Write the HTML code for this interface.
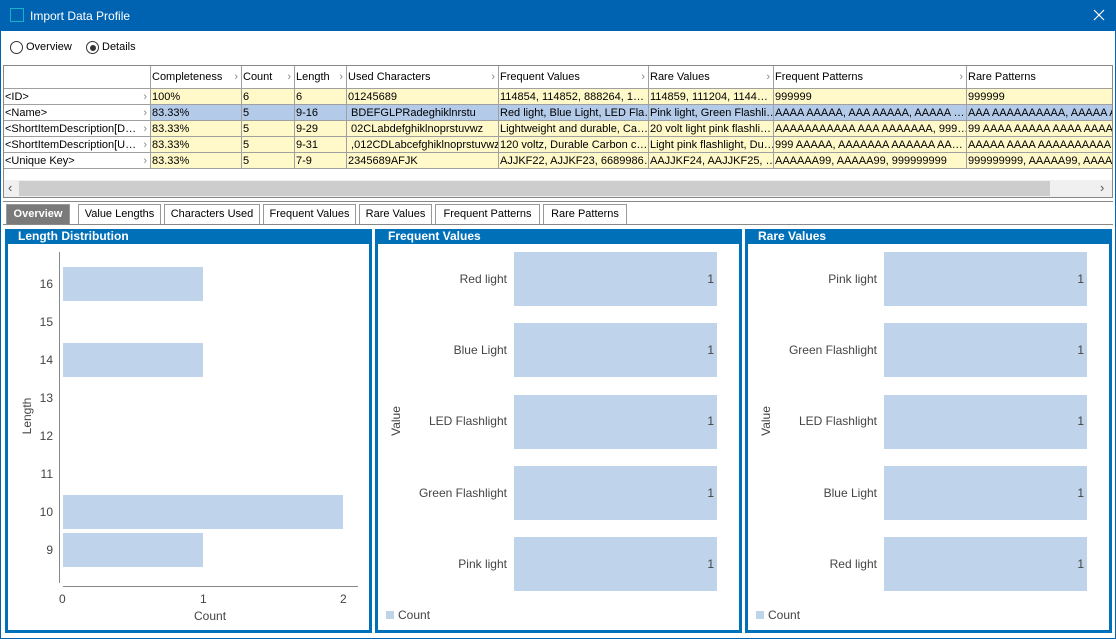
<!DOCTYPE html>
<html><head><style>
*{margin:0;padding:0;box-sizing:border-box}
body{width:1116px;height:639px;background:#fff;font-family:"Liberation Sans",sans-serif;font-size:11px;color:#000;position:relative;overflow:hidden}
.a{position:absolute}
.title{left:0;top:0;width:1116px;height:31px;background:#0063b1;color:#fff;font-size:12px}
.tbl{left:3px;top:65px;width:1110px;height:133px;border:1px solid #888;background:#fff;overflow:hidden}
.c{position:absolute;height:16px;line-height:16px;border-right:1px solid #a0a0a0;border-bottom:1px solid #a0a0a0;white-space:nowrap;overflow:hidden;padding-left:1px;font-size:11px}
.h{height:23px;line-height:22px;background:#fff}
.y{background:#fff8c8}
.s{background:#b3cbe9}
.tab{position:absolute;top:204px;height:20px;border:1px solid #999;border-bottom:none;line-height:18px;text-align:center;background:#fff;font-size:11px}
.pan{position:absolute;top:229px;height:404px;border:3px solid #0070b8;border-top:15px solid #0070b8;background:#fff}
.ph{position:absolute;top:-15px;left:10px;color:#fff;font-weight:bold;font-size:12px;line-height:14px}
.bar{position:absolute;background:#bfd3eb}
.lb{position:absolute;font-size:12px;color:#444;text-align:right}
</style></head><body>
<div class="a title">
 <div class="a" style="left:10px;top:8px;width:14px;height:14px;border:1px solid #1ab0c8"></div>
 <div class="a" style="left:30px;top:9px">Import Data Profile</div>
 <svg class="a" style="left:1093px;top:9px" width="12" height="12"><path d="M1 1L11 11M11 1L1 11" stroke="#fff" stroke-width="1.2"/></svg>
</div>
<div class="a" style="left:0;top:31px;width:1116px;height:608px;border:1px solid #0063b1;border-top:none"></div>
<div class="a" style="left:10px;top:41px;width:13px;height:13px;border:1px solid #333;border-radius:50%"></div>
<div class="a" style="left:26px;top:41px">Overview</div>
<div class="a" style="left:86px;top:41px;width:13px;height:13px;border:1px solid #333;border-radius:50%"></div>
<div class="a" style="left:89.5px;top:44.5px;width:6px;height:6px;background:#333;border-radius:50%"></div>
<div class="a" style="left:102px;top:41px">Details</div>

<div class="a tbl">
<div class="c h" style="left:0;top:0;width:147px"></div>
<div class="c h" style="left:147px;top:0;width:91px">Completeness<span style="position:absolute;right:3px;color:#888">›</span></div>
<div class="c h" style="left:238px;top:0;width:53px">Count<span style="position:absolute;right:3px;color:#888">›</span></div>
<div class="c h" style="left:291px;top:0;width:52px">Length<span style="position:absolute;right:3px;color:#888">›</span></div>
<div class="c h" style="left:343px;top:0;width:152px">Used Characters<span style="position:absolute;right:3px;color:#888">›</span></div>
<div class="c h" style="left:495px;top:0;width:150px">Frequent Values<span style="position:absolute;right:3px;color:#888">›</span></div>
<div class="c h" style="left:645px;top:0;width:125px">Rare Values<span style="position:absolute;right:3px;color:#888">›</span></div>
<div class="c h" style="left:770px;top:0;width:193px">Frequent Patterns<span style="position:absolute;right:3px;color:#888">›</span></div>
<div class="c h" style="left:963px;top:0;width:150px">Rare Patterns</div>

<div class="c" style="left:0;top:23px;width:147px">&lt;ID&gt;<span style="position:absolute;right:3px;color:#888">›</span></div>
<div class="c y" style="left:147px;top:23px;width:91px">100%</div><div class="c y" style="left:238px;top:23px;width:53px">6</div><div class="c y" style="left:291px;top:23px;width:52px">6</div><div class="c y" style="left:343px;top:23px;width:152px">01245689</div><div class="c y" style="left:495px;top:23px;width:150px">114854, 114852, 888264, 1…</div><div class="c y" style="left:645px;top:23px;width:125px">114859, 111204, 1144…</div><div class="c y" style="left:770px;top:23px;width:193px">999999</div><div class="c y" style="left:963px;top:23px;width:150px">999999</div>

<div class="c" style="left:0;top:39px;width:147px">&lt;Name&gt;<span style="position:absolute;right:3px;color:#888">›</span></div>
<div class="c s" style="left:147px;top:39px;width:91px">83.33%</div><div class="c s" style="left:238px;top:39px;width:53px">5</div><div class="c s" style="left:291px;top:39px;width:52px">9-16</div><div class="c s" style="left:343px;top:39px;width:152px">&nbsp;BDEFGLPRadeghiklnrstu</div><div class="c s" style="left:495px;top:39px;width:150px">Red light, Blue Light, LED Fla…</div><div class="c s" style="left:645px;top:39px;width:125px">Pink light, Green Flashli…</div><div class="c s" style="left:770px;top:39px;width:193px">AAAA AAAAA, AAA AAAAA, AAAAA …</div><div class="c s" style="left:963px;top:39px;width:150px">AAA AAAAAAAAAA, AAAAA A</div>

<div class="c" style="left:0;top:55px;width:147px">&lt;ShortItemDescription[D…<span style="position:absolute;right:3px;color:#888;background:#fff">›</span></div>
<div class="c y" style="left:147px;top:55px;width:91px">83.33%</div><div class="c y" style="left:238px;top:55px;width:53px">5</div><div class="c y" style="left:291px;top:55px;width:52px">9-29</div><div class="c y" style="left:343px;top:55px;width:152px">&nbsp;02CLabdefghiklnoprstuvwz</div><div class="c y" style="left:495px;top:55px;width:150px">Lightweight and durable, Ca…</div><div class="c y" style="left:645px;top:55px;width:125px">20 volt light pink flashli…</div><div class="c y" style="left:770px;top:55px;width:193px">AAAAAAAAAAA AAA AAAAAAA, 999…</div><div class="c y" style="left:963px;top:55px;width:150px">99 AAAA AAAAA AAAA AAAA</div>

<div class="c" style="left:0;top:71px;width:147px">&lt;ShortItemDescription[U…<span style="position:absolute;right:3px;color:#888;background:#fff">›</span></div>
<div class="c y" style="left:147px;top:71px;width:91px">83.33%</div><div class="c y" style="left:238px;top:71px;width:53px">5</div><div class="c y" style="left:291px;top:71px;width:52px">9-31</div><div class="c y" style="left:343px;top:71px;width:152px">&nbsp;,012CDLabcefghiklnoprstuvwz</div><div class="c y" style="left:495px;top:71px;width:150px">120 voltz, Durable Carbon c…</div><div class="c y" style="left:645px;top:71px;width:125px">Light pink flashlight, Du…</div><div class="c y" style="left:770px;top:71px;width:193px">999 AAAAA, AAAAAAA AAAAAA AA…</div><div class="c y" style="left:963px;top:71px;width:150px">AAAAA AAAA AAAAAAAAAA,</div>

<div class="c" style="left:0;top:87px;width:147px">&lt;Unique Key&gt;<span style="position:absolute;right:3px;color:#888">›</span></div>
<div class="c y" style="left:147px;top:87px;width:91px">83.33%</div><div class="c y" style="left:238px;top:87px;width:53px">5</div><div class="c y" style="left:291px;top:87px;width:52px">7-9</div><div class="c y" style="left:343px;top:87px;width:152px">2345689AFJK</div><div class="c y" style="left:495px;top:87px;width:150px">AJJKF22, AJJKF23, 6689986…</div><div class="c y" style="left:645px;top:87px;width:125px">AAJJKF24, AAJJKF25, …</div><div class="c y" style="left:770px;top:87px;width:193px">AAAAAA99, AAAAA99, 999999999</div><div class="c y" style="left:963px;top:87px;width:150px">999999999, AAAAA99, AAAA</div>

<div class="a" style="left:0;top:114px;width:1108px;height:17px;background:#f0f0f0"></div>
<div class="a" style="left:15px;top:115px;width:1031px;height:15px;background:#cdcdcd"></div>
<div class="a" style="left:4px;top:114px;color:#555;font-size:13px">‹</div>
<div class="a" style="left:1096px;top:114px;color:#555;font-size:13px">›</div>
</div>
<div class="a" style="left:3px;top:201px;width:1110px;height:1px;background:#888"></div>

<div class="tab" style="left:6px;width:64px;background:#7a7a7a;color:#fff;font-weight:bold">Overview</div>
<div class="tab" style="left:78px;width:83px">Value Lengths</div>
<div class="tab" style="left:164px;width:96px">Characters Used</div>
<div class="tab" style="left:263px;width:93px">Frequent Values</div>
<div class="tab" style="left:359px;width:73px">Rare Values</div>
<div class="tab" style="left:435px;width:105px">Frequent Patterns</div>
<div class="tab" style="left:543px;width:84px">Rare Patterns</div>
<div class="a" style="left:3px;top:224px;width:1110px;height:1px;background:#888"></div>

<div class="pan" style="left:5px;width:367px"><div class="ph">Length Distribution</div></div>
<div class="a" style="left:59px;top:252px;width:1px;height:331px;background:#888"></div>
<div class="a" style="left:63px;top:586px;width:295px;height:1px;background:#888"></div>
<div class="bar" style="left:63px;top:267px;width:140px;height:34px"></div>
<div class="bar" style="left:63px;top:343px;width:140px;height:34px"></div>
<div class="bar" style="left:63px;top:495px;width:280px;height:34px"></div>
<div class="bar" style="left:63px;top:533px;width:140px;height:34px"></div>
<div class="lb" style="left:30px;top:277px;width:23px">16</div>
<div class="lb" style="left:30px;top:315px;width:23px">15</div>
<div class="lb" style="left:30px;top:353px;width:23px">14</div>
<div class="lb" style="left:30px;top:391px;width:23px">13</div>
<div class="lb" style="left:30px;top:429px;width:23px">12</div>
<div class="lb" style="left:30px;top:467px;width:23px">11</div>
<div class="lb" style="left:30px;top:505px;width:23px">10</div>
<div class="lb" style="left:30px;top:543px;width:23px">9</div>
<div class="lb" style="left:59px;top:592px;text-align:left">0</div>
<div class="lb" style="left:200px;top:592px;text-align:left">1</div>
<div class="lb" style="left:340px;top:592px;text-align:left">2</div>
<div class="lb" style="left:194px;top:609px;text-align:left">Count</div>
<div class="lb" style="left:5px;top:409px;transform:rotate(-90deg);width:44px;text-align:center">Length</div>

<div class="pan" style="left:375px;width:367px"><div class="ph">Frequent Values</div></div>
<div class="bar" style="left:514px;top:252px;width:203px;height:54px"></div>
<div class="bar" style="left:514px;top:323px;width:203px;height:54px"></div>
<div class="bar" style="left:514px;top:395px;width:203px;height:54px"></div>
<div class="bar" style="left:514px;top:466px;width:203px;height:54px"></div>
<div class="bar" style="left:514px;top:537px;width:203px;height:54px"></div>
<div class="lb" style="left:390px;top:272px;width:117px">Red light</div>
<div class="lb" style="left:390px;top:343px;width:117px">Blue Light</div>
<div class="lb" style="left:390px;top:414px;width:117px">LED Flashlight</div>
<div class="lb" style="left:390px;top:486px;width:117px">Green Flashlight</div>
<div class="lb" style="left:390px;top:557px;width:117px">Pink light</div>
<div class="lb" style="left:700px;top:272px;width:14px">1</div>
<div class="lb" style="left:700px;top:343px;width:14px">1</div>
<div class="lb" style="left:700px;top:414px;width:14px">1</div>
<div class="lb" style="left:700px;top:486px;width:14px">1</div>
<div class="lb" style="left:700px;top:557px;width:14px">1</div>
<div class="lb" style="left:376px;top:414px;transform:rotate(-90deg);width:40px;text-align:center">Value</div>
<div class="a" style="left:386px;top:611px;width:8px;height:8px;background:#bfd3eb"></div>
<div class="lb" style="left:398px;top:608px;text-align:left">Count</div>

<div class="pan" style="left:745px;width:367px"><div class="ph">Rare Values</div></div>
<div class="bar" style="left:884px;top:252px;width:203px;height:54px"></div>
<div class="bar" style="left:884px;top:323px;width:203px;height:54px"></div>
<div class="bar" style="left:884px;top:395px;width:203px;height:54px"></div>
<div class="bar" style="left:884px;top:466px;width:203px;height:54px"></div>
<div class="bar" style="left:884px;top:537px;width:203px;height:54px"></div>
<div class="lb" style="left:760px;top:272px;width:117px">Pink light</div>
<div class="lb" style="left:760px;top:343px;width:117px">Green Flashlight</div>
<div class="lb" style="left:760px;top:414px;width:117px">LED Flashlight</div>
<div class="lb" style="left:760px;top:486px;width:117px">Blue Light</div>
<div class="lb" style="left:760px;top:557px;width:117px">Red light</div>
<div class="lb" style="left:1070px;top:272px;width:14px">1</div>
<div class="lb" style="left:1070px;top:343px;width:14px">1</div>
<div class="lb" style="left:1070px;top:414px;width:14px">1</div>
<div class="lb" style="left:1070px;top:486px;width:14px">1</div>
<div class="lb" style="left:1070px;top:557px;width:14px">1</div>
<div class="lb" style="left:746px;top:414px;transform:rotate(-90deg);width:40px;text-align:center">Value</div>
<div class="a" style="left:756px;top:611px;width:8px;height:8px;background:#bfd3eb"></div>
<div class="lb" style="left:768px;top:608px;text-align:left">Count</div>
</body></html>
